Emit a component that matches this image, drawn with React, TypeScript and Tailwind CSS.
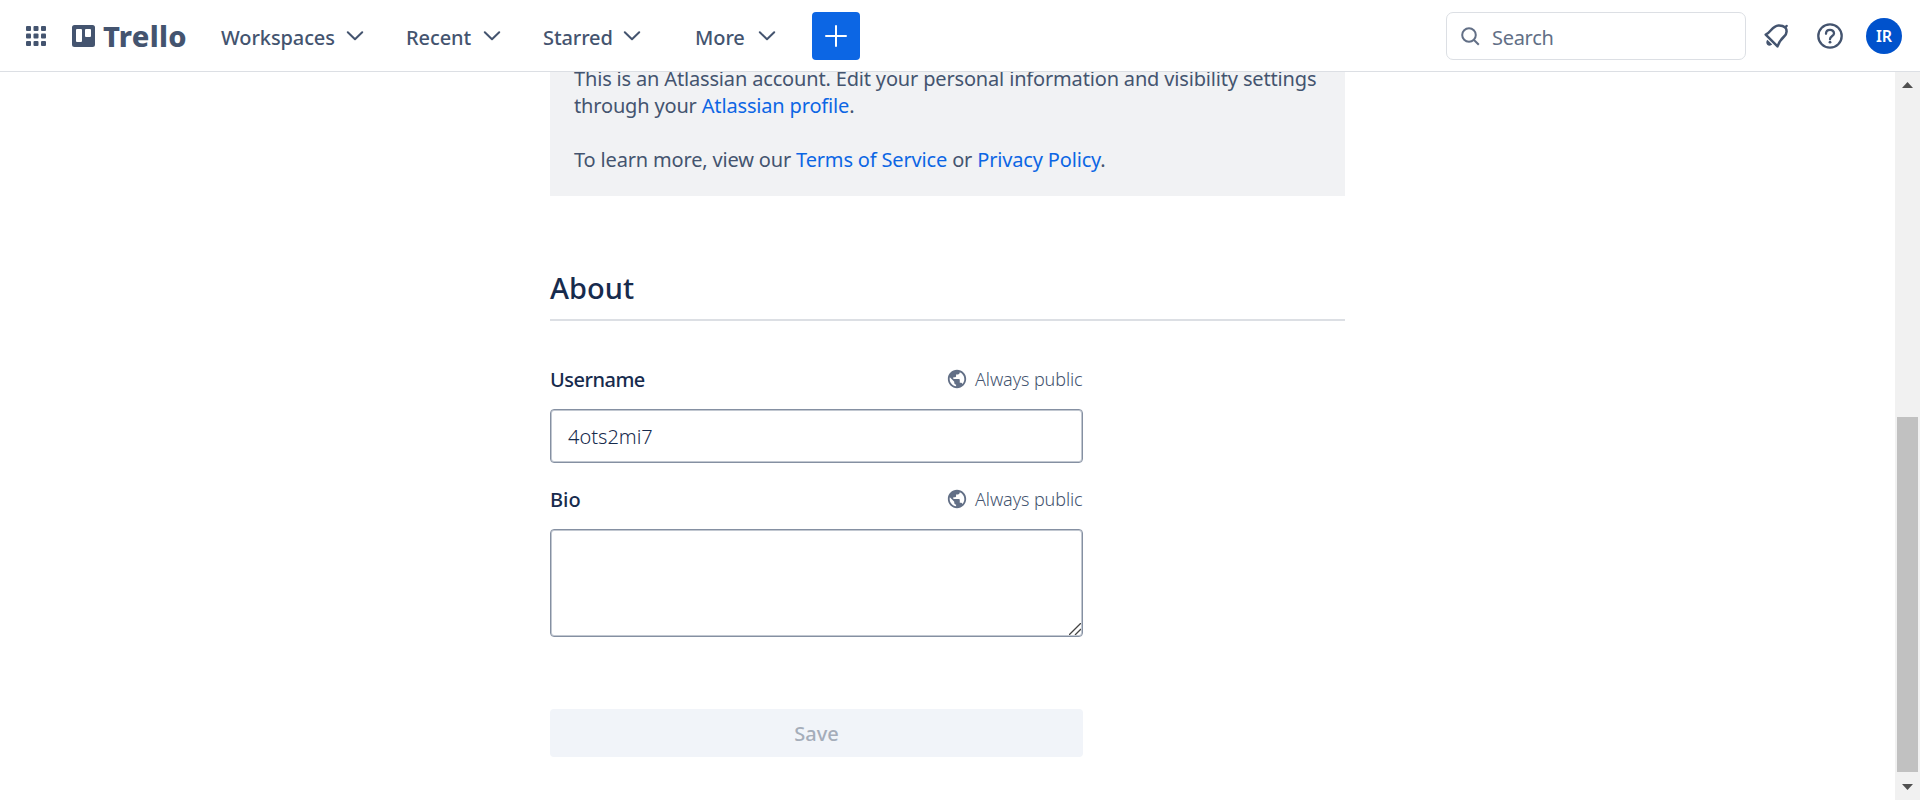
import React from "react";

function Chevron() {
  return (
    <svg className="h-[10px] w-[18px] shrink-0" viewBox="0 0 18 10" fill="none" stroke="#44546f" strokeWidth="2" strokeLinecap="round">
      <path d="M1.8 1.2 9 8.2 16.2 1.2" strokeLinejoin="round" />
    </svg>
  );
}

function Globe() {
  return (
    <svg className="h-[22px] w-[22px] shrink-0" viewBox="0 0 24 24" fill="#626f86">
      <path d="M12 2C6.48 2 2 6.48 2 12s4.48 10 10 10 10-4.48 10-10S17.52 2 12 2zm-1 17.93c-3.95-.49-7-3.85-7-7.93 0-.62.08-1.21.21-1.79L9 15v1c0 1.1.9 2 2 2v1.93zm6.9-2.54c-.26-.81-1-1.39-1.9-1.39h-1v-3c0-.55-.45-1-1-1H8v-2h2c.55 0 1-.45 1-1V7h2c1.1 0 2-.9 2-2v-.41c2.93 1.19 5 4.06 5 7.41 0 2.08-.8 3.97-2.1 5.39z" />
    </svg>
  );
}

function Visibility() {
  return (
    <div className="mb-[2px] flex h-[22px] items-center">
      <Globe />
      <span className="ml-[7px] w-[108px] whitespace-nowrap text-[18px] font-light leading-[22px] tracking-[-0.1px] text-[#44546f]">Always public</span>
    </div>
  );
}

function NavItem({ label, width, margin }: { label: string; width: string; margin: string }) {
  return (
    <button className={`flex items-center ${width} ${margin} justify-between`}>
      <span className="-mb-[3px] whitespace-nowrap text-[20px] font-medium leading-[30px] tracking-[-0.1px]">{label}</span>
      <Chevron />
    </button>
  );
}

export default function App() {
  return (
    <div className="flex h-[800px] w-[1920px] flex-col overflow-hidden bg-white font-['Noto_Sans',sans-serif] text-[20px] text-[#44546f]">
      <header className="flex h-[72px] shrink-0 items-center border-b border-[#dcdfe4] pt-px">
        <svg className="ml-[26px] h-5 w-5" viewBox="0 0 20 20" fill="#44546f">
          {[0, 7.5, 15].map((y) => [0, 7.5, 15].map((x) => <rect key={`${x}-${y}`} x={x} y={y} width="5" height="5" rx="1" />))}
        </svg>
        <svg className="ml-[26px] h-[22px] w-[23px]" viewBox="0 0 23 22">
          <path fill="#44546f" fillRule="evenodd" d="M2.5 0h18A2.5 2.5 0 0 1 23 2.500v17a2.500 2.500 0 0 1-2.500 2.500h-18A2.500 2.500 0 0 1 0 19.500v-17A2.500 2.500 0 0 1 2.500 0ZM5 4a1 1 0 0 0-1 1v11a1 1 0 0 0 1 1h4a1 1 0 0 0 1-1V5a1 1 0 0 0-1-1ZM14 4a1 1 0 0 0-1 1v6a1 1 0 0 0 1 1h4a1 1 0 0 0 1-1V5a1 1 0 0 0-1-1Z" />
        </svg>
        <span className="ml-[8px] w-[83px] whitespace-nowrap text-[29px] font-extrabold leading-[36px] tracking-[0.3px]">Trello</span>
        <NavItem label="Workspaces" width="w-[143px]" margin="ml-[35px]" />
        <NavItem label="Recent" width="w-[95px]" margin="ml-[42px]" />
        <NavItem label="Starred" width="w-[98px]" margin="ml-[42px]" />
        <NavItem label="More" width="w-[81px]" margin="ml-[54px]" />
        <button className="ml-9 flex h-12 w-12 items-center justify-center rounded-[4px] bg-[#0c66e4]">
          <svg className="h-6 w-6" viewBox="0 0 24 24" stroke="#fff" strokeWidth="2" strokeLinecap="round">
            <path d="M12 2v20M2 12h20" />
          </svg>
        </button>
        <div className="ml-auto flex h-12 w-[300px] items-center rounded-[7px] border border-[#dcdfe4] pl-[14px]">
          <svg className="h-[19px] w-[19px]" viewBox="0 0 19 19" fill="none" stroke="#626f86" strokeWidth="2">
            <circle cx="8" cy="8" r="6.800" />
            <path d="m13 13 4.800 4.800" />
          </svg>
          <span className="ml-[12px] pt-[3px] text-[20px] leading-[30px] tracking-[-0.3px] text-[#626f86]">Search</span>
        </div>
        <svg className="ml-[16px] h-[30px] w-[30px]" viewBox="0 0 30 30" fill="none" stroke="#44546f" strokeWidth="2.500">
          <path strokeLinejoin="round" d="M3.700 13.600C9 11.500 10 4.800 16.500 4.500 19 4.400 21.500 5 23.300 6.500 25 8.500 25.300 12.500 22.300 15.200 18.500 18.500 17.300 20.500 15.500 25.400Z" />
          <path strokeLinecap="round" d="M23.300 6.400 24.600 5" />
          <path fill="#44546f" stroke="none" d="M5.300 18.800 10.200 23.600C8.600 25.200 6.300 24.900 5.200 23.700 4 22.400 4 20.300 5.300 18.800Z" />
        </svg>
        <svg className="ml-[25px] h-[26px] w-[26px]" viewBox="0 0 26 26" fill="none" stroke="#44546f" strokeWidth="2.300">
          <circle cx="13" cy="13" r="11.700" />
          <path d="M9 10.800C9 5.600 17 5.600 17 10.500 17 13 13 13 13 16.200" strokeLinecap="round" />
          <circle cx="13" cy="19.200" r="1.400" fill="#44546f" stroke="none" />
        </svg>
        <div className="ml-[23px] mr-[18px] flex h-9 w-9 items-center justify-center rounded-full bg-[#0052cc] pb-px text-[16px] font-semibold leading-none text-white">IR</div>
      </header>
      <div className="flex min-h-0 flex-1">
        <main className="flex flex-1 flex-col pl-[550px]">
          <section className="h-[124px] w-[795px] overflow-hidden bg-[#f1f2f4] pl-6 leading-[27px] tracking-[-0.165px]">
            <p className="-mt-[7px] whitespace-nowrap">This is an Atlassian account. Edit your personal information and visibility settings</p>
            <p className="whitespace-nowrap">through your <a className="text-[#0c66e4]">Atlassian profile</a>.</p>
            <p className="mt-[27px] whitespace-nowrap">To learn more, view our <a className="text-[#0c66e4]">Terms of Service</a> or <a className="text-[#0c66e4]">Privacy Policy</a>.</p>
          </section>
          <h1 className="mt-[74px] h-[51px] w-[795px] border-b-2 border-[#dcdfe4] text-[29px] font-medium leading-[36px] text-[#172b4d]">About</h1>
          <form className="flex w-[533px] flex-col text-[#172b4d]">
            <div className="mt-[44px] flex h-[30px] items-center justify-between">
              <label className="font-medium tracking-[-0.5px]">Username</label>
              <Visibility />
            </div>
            <div className="mt-[14px] flex h-[54px] items-center rounded-[4px] border border-[#8590a2] pl-[17px] pt-[2px] font-light shadow-[inset_0_0_0_1px_#c2c8d1]">4ots2mi7</div>
            <div className="mt-[22px] flex h-[30px] items-center justify-between">
              <label className="font-medium">Bio</label>
              <Visibility />
            </div>
            <div className="mt-[14px] flex h-[108px] items-end justify-end rounded-[4px] border border-[#8590a2] p-px shadow-[inset_0_0_0_1px_#c2c8d1]">
              <svg className="h-3 w-3" viewBox="0 0 12 12" stroke="#444" strokeWidth="1.300"><path d="M0 12 12 0M6 12l6-6" /></svg>
            </div>
            <button type="button" className="mt-[72px] h-12 rounded-[4px] bg-[#f1f4f9] pt-[2px] font-medium text-[#a5adba]">Save</button>
          </form>
        </main>
        <div className="flex w-[25px] flex-col items-center bg-[#f1f1f1]">
          <svg className="mt-[10px] h-[6px] w-[11px]" viewBox="0 0 11 6" fill="#505050"><path d="M0 6 5.500 0 11 6Z" /></svg>
          <div className="mt-[329px] h-[355px] w-[21px] bg-[#c1c1c1]" />
          <svg className="mt-3 h-[6px] w-[11px]" viewBox="0 0 11 6" fill="#505050"><path d="M0 0 5.500 6 11 0Z" /></svg>
        </div>
      </div>
    </div>
  );
}
